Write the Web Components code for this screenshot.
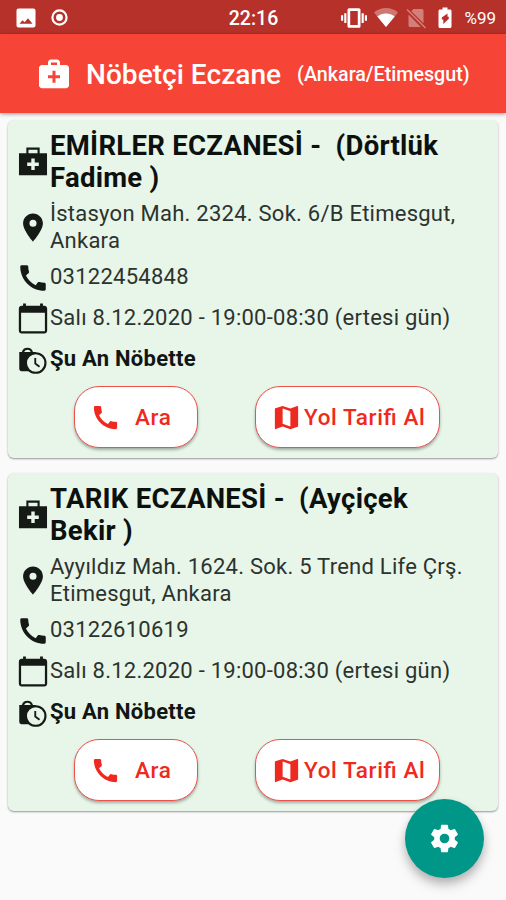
<!DOCTYPE html>
<html>
<head>
<meta charset="utf-8">
<title>Nöbetçi Eczane</title>
<style>
html,body{margin:0;height:100%;background:#fafafa;overflow:hidden}
body{font-family:Roboto,"Noto Sans",sans-serif;color:#151a16}
</style>
</head>
<body>
<pharmacy-app></pharmacy-app>
<script>
const ICONS = {
  medkit: '<path fill-rule="evenodd" d="M20 6h-4V4.300c0-1.100-.9-2-2-2h-4c-1.100 0-2 .9-2 2V6H4c-1.100 0-2 .9-2 2v11.500c0 1.100.9 2 2 2h16c1.100 0 2-.9 2-2V8c0-1.100-.9-2-2-2zM10 4.300h4V6h-4zM16 14.800h-3v3h-2v-3H8v-2h3v-3h2v3h3z"/>',
  bag: '<path fill-rule="evenodd" d="M7.300 5.900V1.800h9.400v4.100h5.200v15.500H2.100V5.900zM8.800 5.900h6.400V3.300H8.800zM10.800 9.500v2.900H7.900v2.400h2.900v2.900h2.400v-2.900h2.900v-2.400h-2.900V9.500z"/>',
  pin: '<path d="M12 1.700C8.130 1.700 5 4.830 5 8.700c0 5.250 7 13 7 13s7-7.750 7-13c0-3.870-3.130-7-7-7zm0 9.500a2.500 2.500 0 0 1 0-5 2.500 2.500 0 0 1 0 5z"/>',
  phone: '<path d="M20.010 15.380c-1.230 0-2.420-.2-3.530-.56-.35-.12-.74-.03-1.010.24l-1.570 1.970c-2.830-1.350-5.480-3.900-6.890-6.830l1.950-1.660c.27-.28.35-.67.24-1.020-.37-1.110-.56-2.300-.56-3.530 0-.54-.45-.99-.99-.99H4.190C3.650 3 3 3.240 3 3.990 3 13.280 10.730 21 20.010 21c.71 0 .99-.63.99-1.180v-3.450c0-.54-.45-.99-.99-.99z"/>',
  calendar: '<path d="M20 2.700h-1V1h-2v1.700H7V1H5v1.700H4c-1.100 0-2 .9-2 2v15.600c0 1.100.9 2 2 2h16c1.100 0 2-.9 2-2V4.700c0-1.100-.9-2-2-2zm.4 18H3.600V7.600h16.800z"/>',
  lockclock: '<path d="M2.300 6.300h1.800a4.100 4.100 0 0 1 7.900 0h2v13.600H3.800q-1.500 0-1.500-1.500zM5.700 6.300h4.800a2.700 2.700 0 0 0-4.800 0z" fill-rule="evenodd"/><circle cx="13.900" cy="14.100" r="6.900" fill="#e8f5e9" stroke="currentColor" stroke-width="1.500"/><path d="M13.600 10.500v4l3 2.200" fill="none" stroke="currentColor" stroke-width="1.300"/>',
  map: '<path d="M20.500 3l-.16.030L15 5.100 9 3 3.360 4.900c-.21.070-.36.250-.36.480V20.500c0 .28.22.5.5.5l.16-.03L9 18.900l6 2.100 5.640-1.900c.21-.07.36-.25.36-.48V3.500c0-.28-.22-.5-.5-.5zM15 19l-6-2.110V5l6 2.110V19z"/>',
  gear: '<path d="M19.430 12.980c.04-.32.070-.64.070-.98s-.03-.66-.07-.98l2.110-1.650c.19-.15.24-.42.12-.64l-2-3.460c-.12-.22-.39-.3-.61-.22l-2.490 1c-.52-.4-1.080-.73-1.690-.98l-.38-2.650A.49.49 0 0 0 14 2h-4c-.25 0-.46.18-.49.42l-.38 2.650c-.61.250-1.170.59-1.690.98l-2.490-1c-.23-.09-.49 0-.61.22l-2 3.460c-.13.22-.07.49.12.64l2.110 1.650c-.04.32-.07.65-.07.98s.03.66.07.98l-2.110 1.650c-.19.15-.24.42-.12.64l2 3.460c.12.22.39.3.61.22l2.490-1c.52.4 1.080.73 1.690.98l.38 2.650c.03.24.24.42.49.42h4c.25 0 .46-.18.49-.42l.38-2.650c.61-.25 1.170-.59 1.690-.98l2.490 1c.23.09.49 0 .61-.22l2-3.460c.12-.22.070-.49-.12-.64l-2.110-1.650zM12 15.500a3.500 3.500 0 1 1 0-7 3.500 3.500 0 0 1 0 7z"/>',
  image: '<path d="M21.500 19.500v-15c0-1.100-.9-2-2-2h-15c-1.100 0-2 .9-2 2v15c0 1.100.9 2 2 2h15c1.100 0 2-.9 2-2zM5.500 17.800l3-3.600 2.200 2 3.300-4 4.500 5.600z"/>',
  record: '<circle cx="12" cy="12" r="8.100" fill="none" stroke="currentColor" stroke-width="2.500"/><circle cx="12" cy="12" r="3.900"/>',
  vibrate: '<path d="M0 14.500h2v-5H0v5zm3 2h2v-9H3v9zm19-7v5h2v-5h-2zm-3 7h2v-9h-2v9zM16.500 3h-9C6.670 3 6 3.670 6 4.500v15c0 .83.670 1.500 1.500 1.500h9c.83 0 1.500-.67 1.500-1.500v-15c0-.83-.67-1.500-1.500-1.500zM15.500 18.500h-7v-13h7v13z"/>',
  wifi: '<path opacity=".35" d="M12 21L0 6.500C3.200 3.600 7.500 2 12 2s8.800 1.600 12 4.500z"/><path d="M12 21L3.300 10.500C5.700 8.600 8.700 7.500 12 7.500s6.300 1.100 8.700 3z"/>',
  nosim: '<path opacity=".38" d="M9.500 3H18q1.500 0 1.500 1.500v12.800L7.300 5.200zM4.500 8.600L16.800 21H6q-1.500 0-1.500-1.500z"/><path opacity=".4" d="M3 3.500L21.500 22" stroke="currentColor" stroke-width="1.400"/>',
  battery: '<path fill-rule="evenodd" d="M17 3.500h-2.500v-2h-5v2H7C6.100 3.500 5.500 4.100 5.500 5v15.500c0 .9.600 1.500 1.500 1.500h10c.9 0 1.500-.6 1.500-1.500V5c0-.9-.6-1.500-1.500-1.500zM10.300 18v-4.500H8.800v-2L14.500 7.500v3.300h1.300v2z"/>'
};

class UiIcon extends HTMLElement {
  constructor(){ super(); this.attachShadow({mode:'open'}); }
  connectedCallback(){
    const s = this.getAttribute('size') || 34;
    this.shadowRoot.innerHTML = `<style>:host{display:block;flex:none;width:${s}px;height:${s}px}svg{display:block;width:100%;height:100%;overflow:visible}</style><svg viewBox="0 0 24 24" fill="currentColor">${ICONS[this.getAttribute('name')]}</svg>`;
  }
}
customElements.define('ui-icon', UiIcon);

class StatusBar extends HTMLElement {
  constructor(){
    super();
    this.attachShadow({mode:'open'}).innerHTML = `<style>
      :host{display:grid;grid-template-columns:1fr auto 1fr;align-items:center;height:34px;box-sizing:border-box;padding:1px 10px 0 14px;background:#b63129;color:#fff}
      .l,.r{display:flex;align-items:center}
      .l{gap:11px}
      .r{justify-content:flex-end}
      .time{font-size:19.500px;font-weight:500;padding:1px 3px 0 0}
      .pct{font-size:17px;margin-left:7px;padding-top:1px}
      .v{margin-right:7px}.w{margin-right:6px}.n{margin-right:5px}
    </style>
    <div class="l"><ui-icon name="image" size="24"></ui-icon><ui-icon name="record" size="21"></ui-icon></div>
    <span class="time">22:16</span>
    <div class="r"><ui-icon class="v" name="vibrate" size="26"></ui-icon><ui-icon class="w" name="wifi" size="24"></ui-icon><ui-icon class="n" name="nosim" size="24"></ui-icon><ui-icon name="battery" size="24"></ui-icon><span class="pct">%99</span></div>`;
  }
}
customElements.define('status-bar', StatusBar);

class AppBar extends HTMLElement {
  constructor(){
    super();
    this.attachShadow({mode:'open'}).innerHTML = `<style>
      :host{display:flex;align-items:center;height:79px;box-sizing:border-box;padding:1px 0 0 36px;background:#f64437;color:#fff;box-shadow:0 1px 4px rgba(0,0,0,.4);position:relative;white-space:nowrap}
      h1{margin:0 0 0 14px;font-size:28.100px;font-weight:500}
      .sub{margin-left:16px;font-size:19.700px;font-weight:500}
    </style><ui-icon name="medkit" size="36"></ui-icon><h1><slot></slot></h1><span class="sub"><slot name="place"></slot></span>`;
  }
}
customElements.define('app-bar', AppBar);

class InfoRow extends HTMLElement {
  constructor(){ super(); this.attachShadow({mode:'open'}); }
  connectedCallback(){
    this.shadowRoot.innerHTML = `<style>
      :host{display:flex;align-items:center;height:41px;font-size:22px;line-height:26.500px;letter-spacing:.25px;color:#2c332e}
      span{white-space:pre}
      ui-icon{color:#151a16}
      :host([kind=title]){height:73px;font-size:27.500px;line-height:32px;font-weight:700;letter-spacing:.28px;color:#0d110e}
      :host([kind=address]){height:59px}
      :host([kind=status]){font-weight:700;color:#111612}
    </style><ui-icon name="${this.getAttribute('icon')}" size="34"></ui-icon><span><slot></slot></span>`;
  }
}
customElements.define('info-row', InfoRow);

class PillButton extends HTMLElement {
  constructor(){ super(); this.attachShadow({mode:'open'}); }
  connectedCallback(){
    this.shadowRoot.innerHTML = `<style>
      :host{display:block}
      button{display:flex;align-items:center;width:100%;height:62px;margin:0;padding:0 0 0 15px;border:1.400px solid #e9534a;border-radius:25px;background:#fff;color:#ee2a20;font:500 22.500px Roboto,sans-serif;letter-spacing:.6px;font-feature-settings:"liga" 1;white-space:nowrap;box-shadow:0 2px 3px rgba(0,0,0,.3)}
      span{margin-left:var(--gap,2px)}
    </style><button><ui-icon name="${this.getAttribute('icon')}" size="31"></ui-icon><span><slot></slot></span></button>`;
  }
}
customElements.define('pill-button', PillButton);

class PharmacyCard extends HTMLElement {
  constructor(){
    super();
    this.attachShadow({mode:'open'}).innerHTML = `<style>
      :host{display:block;height:338px;box-sizing:border-box;padding:5px 8px 0;background:#e8f5e9;border-radius:6px;box-shadow:0 1px 2px rgba(0,0,0,.4)}
      .actions{display:flex;padding:6px 0 0 58px;gap:57px}
      .call{width:124px;--gap:14px}.route{width:185px}
    </style>
    <info-row kind="title" icon="bag"><slot name="name"></slot></info-row>
    <info-row kind="address" icon="pin"><slot name="address"></slot></info-row>
    <info-row kind="phone" icon="phone"><slot name="phone"></slot></info-row>
    <info-row icon="calendar"><slot name="date"></slot></info-row>
    <info-row kind="status" icon="lockclock"><span>Şu An Nöbette</span></info-row>
    <div class="actions"><pill-button class="call" icon="phone">Ara</pill-button><pill-button class="route" icon="map">Yol Tarifi Al</pill-button></div>`;
  }
}
customElements.define('pharmacy-card', PharmacyCard);

class FabButton extends HTMLElement {
  constructor(){
    super();
    this.attachShadow({mode:'open'}).innerHTML = `<style>
      :host{display:flex;align-items:center;justify-content:center;width:79px;height:79px;border-radius:50%;background:#009788;color:#fff;box-shadow:0 5px 8px rgba(0,0,0,.2),0 8px 14px rgba(0,0,0,.12)}
    </style><ui-icon name="gear" size="33"></ui-icon>`;
  }
}
customElements.define('fab-button', FabButton);

class PharmacyApp extends HTMLElement {
  constructor(){
    super();
    this.attachShadow({mode:'open'}).innerHTML = `<style>
      :host{display:block;position:relative;width:506px;height:900px;background:#fafafa;overflow:hidden}
      main{display:flex;flex-direction:column;gap:15px;padding:7px 8px 0 8px}
      fab-button{position:absolute;right:22px;bottom:22px}
    </style>
    <status-bar></status-bar>
    <app-bar>Nöbetçi Eczane<span slot="place">(Ankara/Etimesgut)</span></app-bar>
    <main>
      <pharmacy-card><span slot="name">EMİRLER ECZANESİ -  (Dörtlük<br>Fadime )</span><span slot="address">İstasyon Mah. 2324. Sok. 6/B Etimesgut,<br>Ankara</span><span slot="phone">03122454848</span><span slot="date">Salı 8.12.2020 - 19:00-08:30 (ertesi gün)</span></pharmacy-card>
      <pharmacy-card><span slot="name">TARIK ECZANESİ -  (Ayçiçek<br>Bekir )</span><span slot="address">Ayyıldız Mah. 1624. Sok. 5 Trend Life Çrş.<br>Etimesgut, Ankara</span><span slot="phone">03122610619</span><span slot="date">Salı 8.12.2020 - 19:00-08:30 (ertesi gün)</span></pharmacy-card>
    </main>
    <fab-button></fab-button>`;
  }
}
customElements.define('pharmacy-app', PharmacyApp);
</script>
</body>
</html>
